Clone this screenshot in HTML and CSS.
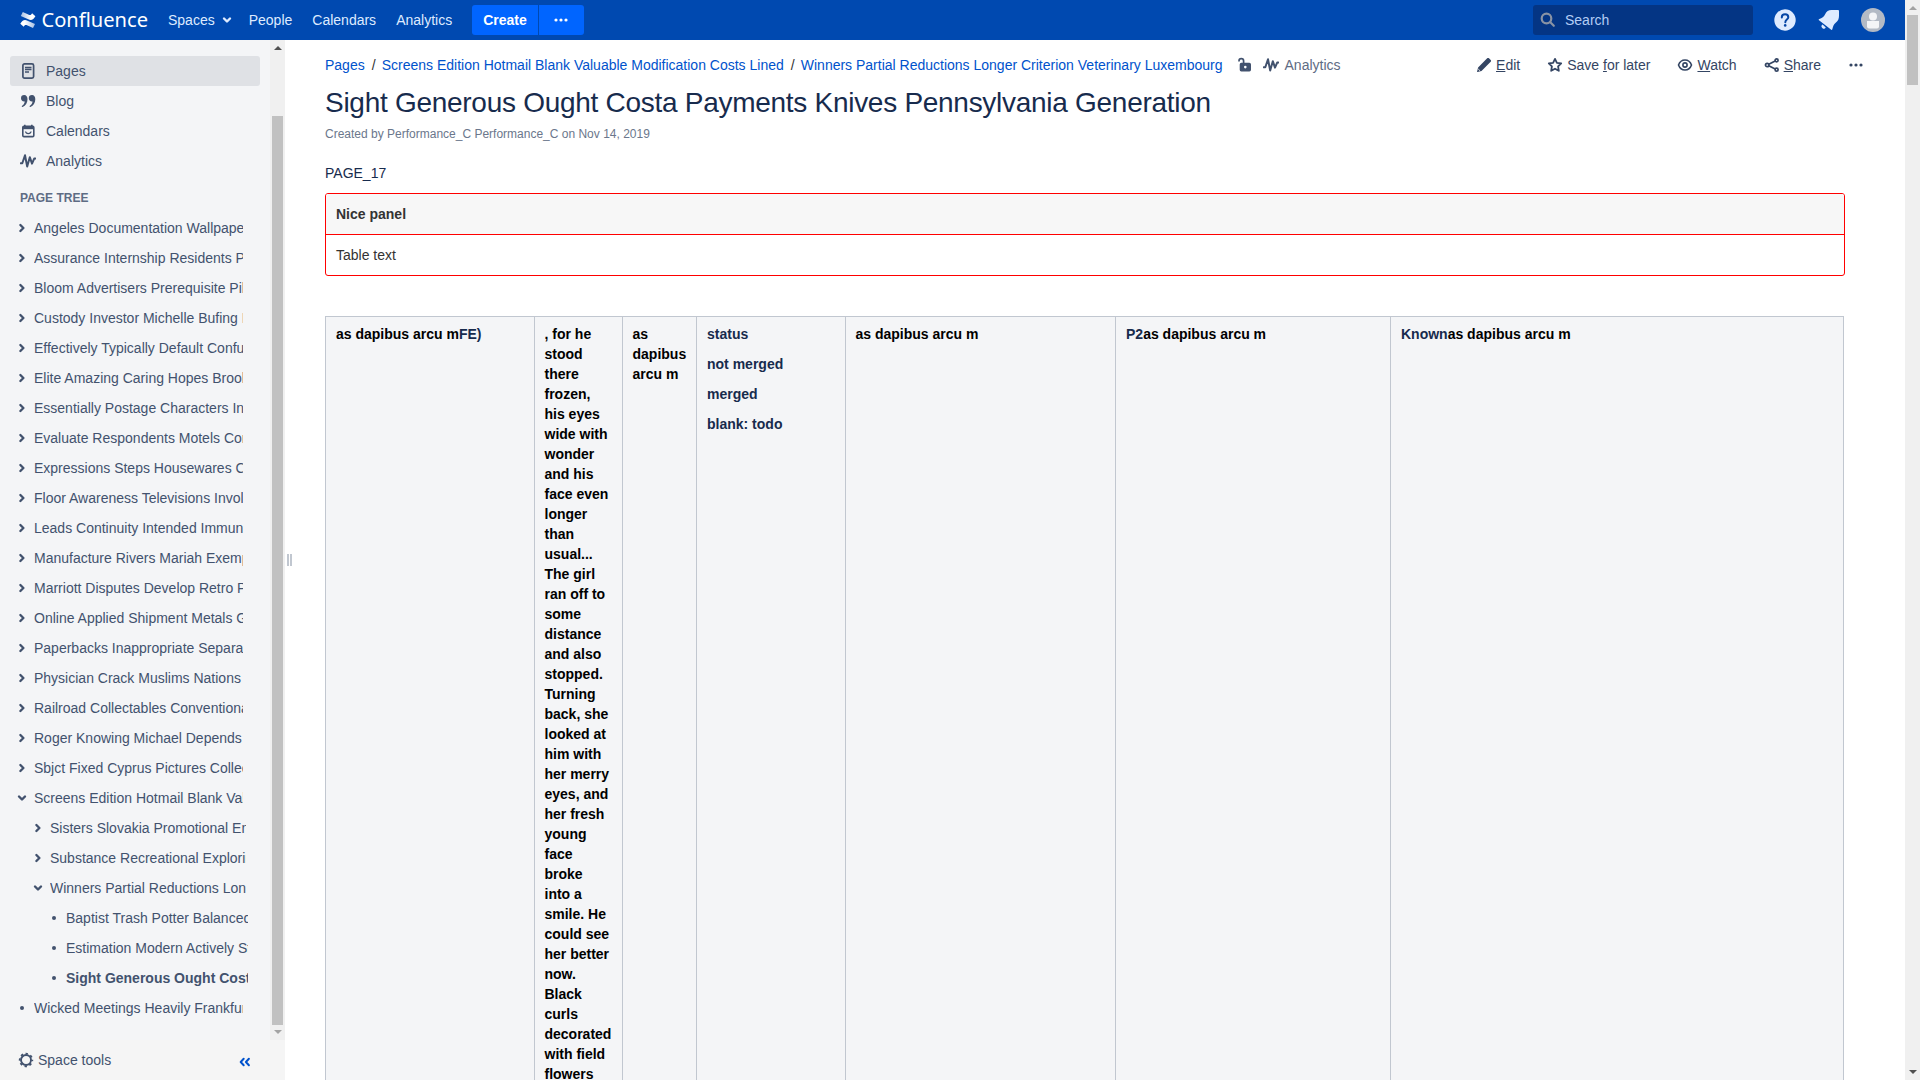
FILE: index.html
```html
<!DOCTYPE html>
<html lang="en">
<head>
<meta charset="utf-8">
<title>Sight Generous Ought Costa Payments Knives Pennsylvania Generation - Confluence</title>
<link rel="stylesheet" href="styles.css">
</head>
<body>
<svg class="defs" width="0" height="0">
  <symbol id="pulse" viewBox="0 0 16 16"><path d="M.8 10.2h1.5L5 2.2l2.2 11.4 2.6-9.4 2.2 6.4 2.2-5h1.2" fill="none" stroke="currentColor" stroke-width="2" stroke-linejoin="round" stroke-linecap="round"/></symbol>
  <symbol id="right" viewBox="0 0 8 10"><path d="M2.4 2 5.400 5 2.400 8" fill="none" stroke="currentColor" stroke-width="2.400" stroke-linecap="round" stroke-linejoin="round"/></symbol>
  <symbol id="down" viewBox="0 0 10 8"><path d="M2 2.500 5 5.500l3-3" fill="none" stroke="currentColor" stroke-width="2.400" stroke-linecap="round" stroke-linejoin="round"/></symbol>
  <symbol id="dots" viewBox="0 0 14 4"><circle cx="2" cy="2" r="1.6"/><circle cx="7" cy="2" r="1.6"/><circle cx="12" cy="2" r="1.6"/></symbol>
</svg>
<div class="app">
  <div class="window">
    <header class="topbar">
      <svg class="logo" width="130" height="24" viewBox="0 0 130 24">
        <defs>
          <linearGradient id="ga" x1="0" x2="1"><stop offset="0" stop-color="#fff" stop-opacity=".65"/><stop offset=".7" stop-color="#fff"/></linearGradient>
          <linearGradient id="gb" x1="1" x2="0"><stop offset="0" stop-color="#fff" stop-opacity=".65"/><stop offset=".7" stop-color="#fff"/></linearGradient>
        </defs>
        <path d="M.3 15.800c1.800-3 3.800-4.700 7.200-3.100l7.500 3.300-2 4-6.500-2.900c-1.200-.6-2 .1-2.800 1.600L.3 15.800Z" fill="url(#gb)"/>
        <path d="M15.400 8.200c-1.800 3-3.800 4.700-7.200 3.100L.8 8l2-4 6.500 2.900c1.200.6 2-.1 2.800-1.600l3.300 2.900Z" fill="url(#ga)"/>
        <text x="21.500" y="19" textLength="106.500" lengthAdjust="spacingAndGlyphs" class="wordmark">Confluence</text>
      </svg>
      <nav class="menu">
        <a class="spaces">Spaces <svg width="10" height="8"><use href="#down"/></svg></a>
        <a>People</a><a>Calendars</a><a>Analytics</a>
      </nav>
      <div class="create"><b>Create</b><span><svg width="14" height="4" fill="currentColor"><use href="#dots"/></svg></span></div>
      <div class="search"><svg width="16" height="16" viewBox="0 0 16 16" fill="none" stroke="#8993a4" stroke-width="2.200"><circle cx="6.500" cy="6.500" r="4.800"/><path d="m10.300 10.300 3.500 3.500" stroke-linecap="round"/></svg>Search</div>
      <svg class="help" width="22" height="22" viewBox="0 0 22 22"><circle cx="11" cy="11" r="10.700" fill="#deebff"/><path d="M7.800 8.500c0-2 1.400-3.200 3.300-3.200s3.200 1.200 3.200 2.900c0 2.400-3 2.400-3 5" fill="none" stroke="#0747a6" stroke-width="2" stroke-linecap="round"/><circle cx="11.200" cy="16.400" r="1.300" fill="#0747a6"/></svg>
      <svg class="bell" width="22" height="22" viewBox="0 0 22 22" fill="#deebff"><path d="M1.300 9.900C4 8.900 6 8 7 5.500 8.300 2.300 10.500 1 13.500 1h6.300c.8 0 1.200.4 1.200 1.200v4.600c0 3-.8 5.200-3.300 7-2 1.500-2.700 3.600-3.300 6.300-.2.900-.9 1.100-1.500.5L1 11.300c-.5-.5-.4-1.100.3-1.400Z"/><path d="m4.600 15.400 3.200 3.200a2.300 2.300 0 1 1-3.200-3.200Z"/></svg>
      <svg class="avatar" width="24" height="24" viewBox="0 0 24 24"><circle cx="12" cy="12" r="12" fill="#b3bac5"/><circle cx="12" cy="8.500" r="4" fill="#f4f5f7"/><path d="M6 13h12v5.500a2 2 0 0 1-2 2H8a2 2 0 0 1-2-2Z" fill="#f4f5f7"/></svg>
    </header>
    <div class="body">
      <aside class="side">
        <div class="sidemain">
          <div class="sidescroll">
            <nav class="links">
              <a class="on"><svg width="16" height="16" viewBox="0 0 16 16" fill="none" stroke="currentColor"><rect x="2.900" y=".9" width="10.700" height="14.200" rx="1.600" stroke-width="1.700"/><path d="M5 4.500h6.500M5 6.500h6.500M5 9h4" stroke-width="1.400"/></svg>Pages</a>
              <a><svg width="16" height="16" viewBox="0 0 16 16" fill="currentColor"><path d="M1 5.200A3.200 3.200 0 0 1 4.200 2c2.100 0 3.300 1.700 3.300 4.200 0 3.600-1.800 6.600-4.900 7.700-.8.200-1.200-.7-.5-1.200 1.500-1 2.400-2.400 2.700-4.300C2.600 8.800 1 7.200 1 5.200Z"/><path d="M8.800 5.200A3.200 3.200 0 0 1 12 2c2.100 0 3.300 1.700 3.300 4.200 0 3.600-1.800 6.600-4.900 7.700-.8.200-1.200-.7-.5-1.200 1.500-1 2.400-2.400 2.700-4.300-2.200.4-3.800-1.200-3.800-3.200Z"/></svg>Blog</a>
              <a><svg width="16" height="16" viewBox="0 0 16 16" fill="none" stroke="currentColor"><rect x="2.800" y="3.300" width="11" height="10.300" rx="1.200" stroke-width="1.600"/><path d="M2.500 5h11.500" stroke-width="2.400"/><path d="M4.800 1.800v2M11.800 1.800v2" stroke-width="1.600"/><path d="M5.500 8.500c.5 2.700 5.100 2.700 5.600 0" stroke-width="1.300"/></svg>Calendars</a>
              <a><svg width="16" height="16"><use href="#pulse"/></svg>Analytics</a>
            </nav>
            <h5>PAGE TREE</h5>
            <ul class="tree">
              <li><svg width="8" height="10"><use href="#right"/></svg><span>Angeles Documentation Wallpaper</span></li>
              <li><svg width="8" height="10"><use href="#right"/></svg><span>Assurance Internship Residents Pa</span></li>
              <li><svg width="8" height="10"><use href="#right"/></svg><span>Bloom Advertisers Prerequisite Pill</span></li>
              <li><svg width="8" height="10"><use href="#right"/></svg><span>Custody Investor Michelle Bufing Re</span></li>
              <li><svg width="8" height="10"><use href="#right"/></svg><span>Effectively Typically Default Confus</span></li>
              <li><svg width="8" height="10"><use href="#right"/></svg><span>Elite Amazing Caring Hopes Brook</span></li>
              <li><svg width="8" height="10"><use href="#right"/></svg><span>Essentially Postage Characters Int</span></li>
              <li><svg width="8" height="10"><use href="#right"/></svg><span>Evaluate Respondents Motels Con</span></li>
              <li><svg width="8" height="10"><use href="#right"/></svg><span>Expressions Steps Housewares Co</span></li>
              <li><svg width="8" height="10"><use href="#right"/></svg><span>Floor Awareness Televisions Involv</span></li>
              <li><svg width="8" height="10"><use href="#right"/></svg><span>Leads Continuity Intended Immune</span></li>
              <li><svg width="8" height="10"><use href="#right"/></svg><span>Manufacture Rivers Mariah Exempt</span></li>
              <li><svg width="8" height="10"><use href="#right"/></svg><span>Marriott Disputes Develop Retro Pe</span></li>
              <li><svg width="8" height="10"><use href="#right"/></svg><span>Online Applied Shipment Metals Gr</span></li>
              <li><svg width="8" height="10"><use href="#right"/></svg><span>Paperbacks Inappropriate Separat</span></li>
              <li><svg width="8" height="10"><use href="#right"/></svg><span>Physician Crack Muslims Nations</span></li>
              <li><svg width="8" height="10"><use href="#right"/></svg><span>Railroad Collectables Conventional</span></li>
              <li><svg width="8" height="10"><use href="#right"/></svg><span>Roger Knowing Michael Depends</span></li>
              <li><svg width="8" height="10"><use href="#right"/></svg><span>Sbjct Fixed Cyprus Pictures Collect</span></li>
              <li><svg width="10" height="8"><use href="#down"/></svg><span>Screens Edition Hotmail Blank Valu</span></li>
              <li class="l2"><svg width="8" height="10"><use href="#right"/></svg><span>Sisters Slovakia Promotional Em</span></li>
              <li class="l2"><svg width="8" height="10"><use href="#right"/></svg><span>Substance Recreational Explorin</span></li>
              <li class="l2"><svg width="10" height="8"><use href="#down"/></svg><span>Winners Partial Reductions Long</span></li>
              <li class="l3"><i></i><span>Baptist Trash Potter Balanced</span></li>
              <li class="l3"><i></i><span>Estimation Modern Actively Ste</span></li>
              <li class="l3"><i></i><span><b>Sight Generous Ought Costa</b></span></li>
              <li><i></i><span>Wicked Meetings Heavily Frankfurt</span></li>
            </ul>
          </div>
          <div class="bar sidebar-track">
            <svg width="8" height="4" viewBox="0 0 8 4"><path d="M0 4 4 0l4 4Z" fill="#505050"/></svg>
            <div class="thumb"></div>
            <svg width="8" height="4" viewBox="0 0 8 4"><path d="M0 0h8L4 4Z" fill="#a3a3a3"/></svg>
          </div>
        </div>
        <div class="tools">
          <svg width="16" height="16" viewBox="0 0 16 16" fill="none" stroke="currentColor"><circle cx="8" cy="8" r="5" stroke-width="1.900"/><circle cx="8" cy="8" r="6.300" stroke-width="1.800" stroke-dasharray="2.400 2.548" stroke-dashoffset="1.200"/></svg>
          <span>Space tools</span>
          <svg class="collapse" width="12" height="10" viewBox="0 0 12 10" fill="none" stroke="#0052cc" stroke-width="2" stroke-linecap="round" stroke-linejoin="round"><path d="M4.700 1.800 1.700 5l3 3.200M9.900 1.800 6.900 5l3 3.200"/></svg>
        </div>
      </aside>
      <div class="grip"><i></i><i></i></div>
      <main class="content">
        <div class="crumbrow">
          <a>Pages</a><em>/</em><a>Screens Edition Hotmail Blank Valuable Modification Costs Lined</a><em>/</em><a>Winners Partial Reductions Longer Criterion Veterinary Luxembourg</a>
          <svg class="lock" width="16" height="16" viewBox="0 0 16 16"><path d="M2 4.600V4a2.300 2.300 0 0 1 4.600 0v3" fill="none" stroke="currentColor" stroke-width="1.700"/><path fill-rule="evenodd" d="M4.300 5.800h8.100a1.600 1.600 0 0 1 1.600 1.600v5.400a1.600 1.600 0 0 1-1.600 1.600H4.300a1.600 1.600 0 0 1-1.600-1.600V7.400a1.600 1.600 0 0 1 1.600-1.600ZM8.300 8.800a1.300 1.300 0 1 0 0 2.600 1.300 1.300 0 0 0 0-2.600Z" fill="currentColor"/></svg>
          <span class="analytics"><svg width="16" height="16"><use href="#pulse"/></svg>Analytics</span>
          <div class="actions">
            <span><svg width="16" height="16" viewBox="0 0 16 16" fill="currentColor"><path d="m10.200 2.300 1-1c.6-.6 1.300-.5 1.800 0l1.700 1.700c.5.500.6 1.200 0 1.800l-1 1-8.200 8.100-3.900 1c-.4.100-.6-.1-.5-.5l1-3.900Z"/><path d="m2.200 12 1.900 1.900" stroke="#fff" stroke-width=".8"/></svg><u>E</u>dit</span>
            <span><svg width="16" height="16" viewBox="0 0 16 16" fill="none" stroke="currentColor" stroke-width="1.800" stroke-linejoin="round"><path d="m8 1.900 1.900 3.900 4.300.6-3.100 3 .7 4.400L8 11.700l-3.800 2.100.7-4.400-3.100-3 4.300-.6Z"/></svg>Save <u>f</u>or later</span>
            <span><svg width="16" height="16" viewBox="0 0 16 16" fill="none" stroke="currentColor" stroke-width="1.600"><path d="M1.500 8C2.700 4.800 5.100 3 8 3s5.300 1.800 6.500 5c-1.200 3.200-3.600 5-6.500 5S2.700 11.200 1.500 8Z"/><circle cx="8" cy="8" r="2.100"/></svg><u>W</u>atch</span>
            <span><svg width="16" height="16" viewBox="0 0 16 16" fill="none" stroke="currentColor" stroke-width="1.700"><circle cx="3.200" cy="8" r="1.700"/><circle cx="12.600" cy="3.300" r="1.500"/><circle cx="12.600" cy="12.700" r="1.500"/><path d="m4.700 7.200 6.500-3.200M4.700 8.800l6.500 3.200"/></svg><u>S</u>hare</span>
            <svg class="more" width="14" height="4" fill="currentColor"><use href="#dots"/></svg>
          </div>
        </div>
        <h1>Sight Generous Ought Costa Payments Knives Pennsylvania Generation</h1>
        <div class="meta">Created by Performance_C Performance_C on Nov 14, 2019</div>
        <p class="pageid">PAGE_17</p>
        <section class="panel"><div class="ph">Nice panel</div><div class="pb">Table text</div></section>
        <div class="table">
          <div>as dapibus arcu m<s>FE)</s></div>
          <div class="half">, for he<br>stood<br>there<br>frozen,<br>his eyes<br>wide with<br>wonder<br>and his<br>face even<br>longer<br>than<br>usual...<br>The girl<br>ran off to<br>some<br>distance<br>and also<br>stopped.<br>Turning<br>back, she<br>looked at<br>him with<br>her merry<br>eyes, and<br>her fresh<br>young<br>face<br>broke<br>into a<br>smile. He<br>could see<br>her better<br>now.<br>Black<br>curls<br>decorated<br>with field<br>flowers</div>
          <div class="half">as<br>dapibus<br>arcu m</div>
          <div class="status"><p>status</p><p>not merged</p><p>merged</p><p>blank: todo</p></div>
          <div class="half">as dapibus arcu m</div>
          <div><s>P2</s>as dapibus arcu m</div>
          <div><s>Known</s>as dapibus arcu m</div>
        </div>
      </main>
    </div>
  </div>
  <div class="bar page-track">
    <svg width="8" height="4" viewBox="0 0 8 4"><path d="M0 4 4 0l4 4Z" fill="#a3a3a3"/></svg>
    <div class="thumb"></div>
    <svg width="8" height="4" viewBox="0 0 8 4"><path d="M0 0h8L4 4Z" fill="#505050"/></svg>
  </div>
</div>
</body>
</html>
```
FILE: styles.css
```css
* { box-sizing: border-box; }
body { margin: 0; font: 14px/20px "Liberation Sans", Arial, sans-serif; color: #172b4d; background: #fff; overflow: hidden; }
svg { flex: none; display: block; }
.defs { position: absolute; }
.app { display: flex; width: 1920px; height: 1080px; overflow: hidden; }
.window { width: 1905px; display: flex; flex-direction: column; }

.topbar { height: 40px; flex: none; background: #0049b0; color: #deebff; display: flex; align-items: center; padding-left: 20px; }
.logo { overflow: visible; }
.wordmark { font: 20px "Noto Sans", sans-serif; fill: #fff; }
.menu { display: flex; width: 302px; margin-left: 18px; gap: 20px; }
.menu a { white-space: nowrap; }
.spaces { display: flex; align-items: center; gap: 7px; margin-right: -3px; }
.create { display: flex; gap: 1px; color: #fff; margin-left: 2px; }
.create b, .create span { height: 30px; background: #0065ff; display: flex; align-items: center; justify-content: center; }
.create b { width: 66px; border-radius: 3px 0 0 3px; }
.create span { width: 45px; border-radius: 0 3px 3px 0; padding-right: 2px; }
.search { margin-left: auto; width: 220px; height: 30px; border-radius: 3px; background: #043584; color: #b3cdf5; display: flex; align-items: center; gap: 9px; padding-left: 7px; }
.help { margin-left: 21px; }
.bell { margin-left: 22px; }
.avatar { margin: 0 20px 0 21px; }

.body { flex: 1; min-height: 0; display: flex; }
.side { width: 285px; flex: none; background: #f4f5f7; display: flex; flex-direction: column; color: #42526e; }
.sidemain { height: 1000px; display: flex; }
.sidescroll { width: 270px; padding: 16px 10px 0; overflow: hidden; }
.links a { display: flex; align-items: center; height: 30px; padding-left: 10px; gap: 10px; border-radius: 3px; }
.links .on { background: #dfe1e5; }
h5 { margin: 12px 0 5px 10px; font-size: 12px; line-height: 20px; color: #5e6c84; }
.tree { list-style: none; margin: 0; padding: 0; }
.tree li { height: 30px; display: flex; align-items: center; }
.tree svg, .tree i { flex: none; margin: 0 8px; }
.tree svg[width="10"] { margin: 0 7px; }
.tree i { width: 4px; height: 4px; border-radius: 50%; background: #42526e; margin: 0 10px; }
.tree span { width: 209px; overflow: hidden; white-space: nowrap; }
.tree .l2 { padding-left: 16px; }
.tree .l2 span { width: 196px; }
.tree .l3 { padding-left: 32px; }
.tree .l3 span { width: 182px; }
.tools { flex: 1; background: #f5f5f5; display: flex; align-items: center; padding-left: 18px; gap: 4px; }
.tools span { flex: 1; }
.collapse { margin: 4px 34px 0 0; }

.bar { width: 15px; flex: none; background: #f0f0f0; display: flex; flex-direction: column; align-items: center; justify-content: space-between; padding: 6px 0; }
.thumb { width: 11px; background: #c1c1c1; }
.sidebar-track .thumb { height: 909px; margin: 61px 0 0; }
.page-track .thumb { height: 70px; margin: 5px 0 auto; }

.grip { width: 10px; display: flex; gap: 1px; padding: 514px 0 0 2px; }
.grip i { width: 2px; height: 12px; background: #c1c7d0; }

.content { flex: 1; min-width: 0; padding: 15px 60px 0 30px; }
.crumbrow { display: flex; align-items: center; height: 20px; white-space: nowrap; color: #42526e; }
.crumbrow > a { color: #0052cc; }
.crumbrow em { font-style: normal; color: #333; width: 17px; padding-left: 7px; }
.lock { margin-left: 14px; }
.analytics { display: flex; gap: 6px; margin-left: 10px; color: #5e6c84; }
.analytics svg { margin-top: 2px; color: #42526e; }
.actions { display: flex; align-items: center; margin: 0 -18px 0 auto; gap: 27px; color: #344563; }
.actions > span { display: block; }
.actions > span svg { display: inline-block; vertical-align: -3px; margin: 0 4px 0 -1px; }
.actions > span:nth-child(n+2) { padding-left: 1px; }
.actions .more { margin-left: 1px; }
h1 { margin: 12px 0 0; font-size: 28px; line-height: 32px; font-weight: 400; letter-spacing: -0.28px; }
.meta { margin-top: 5px; font-size: 12px; color: #6b778c; }
.pageid { margin: 19px 0 10px; }
.panel { border: 1px solid #f00; border-radius: 3px; color: #333; height: 83px; overflow: hidden; }
.ph { height: 41px; padding: 10px; background: #f7f7f7; border-bottom: 1px solid #f00; font-weight: bold; }
.pb { padding: 10px; }
.table { margin: 40px 0 0; width: 1519px; height: 780px; display: grid; grid-template-columns: 209px 88px 74px 149px 270px 275px 454px; border-top: 1px solid #c1c7d0; border-right: 1px solid #c1c7d0; background: #f4f5f7; font-weight: bold; color: #000; }
.table > div { border-left: 1px solid #c1c7d0; padding: 7px 0 0 10px; white-space: nowrap; min-width: 0; }
.table .half { padding-left: 9.5px; }
.table s { text-decoration: none; color: #172b4d; }
.status p { margin: 0 0 10px; color: #172b4d; }
```
